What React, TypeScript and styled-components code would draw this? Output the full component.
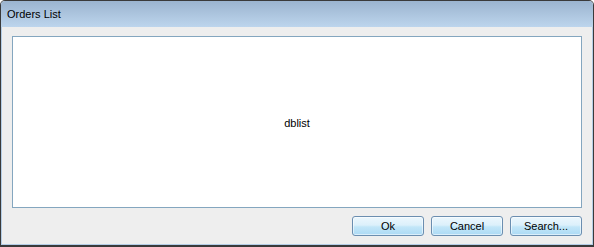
import React from "react";
import styled, { createGlobalStyle } from "styled-components";

const Global = createGlobalStyle`
  html, body { margin: 0; padding: 0; background: #ffffff; }
  * { box-sizing: border-box; }
`;

const Window = styled.div`
  width: 594px;
  height: 247px;
  display: flex;
  flex-direction: column;
  border: 1px solid #3a3a3a;
  border-bottom-width: 2px;
  border-radius: 5px 5px 0 0;
  overflow: hidden;
  font-family: Tahoma, "DejaVu Sans", "Liberation Sans", sans-serif;
  font-size: 11px;
  color: #000;
`;

const TitleBar = styled.div`
  height: 26px;
  flex: none;
  display: flex;
  align-items: center;
  padding-left: 6px;
  background: linear-gradient(#9bb4cf, #bdd5ed);
  font-family: "Liberation Sans", sans-serif;
  font-size: 11px;
`;

const Body = styled.div`
  flex: 1;
  display: flex;
  flex-direction: column;
  gap: 8px;
  padding: 9px 10px 8px;
  background: #eeeeee;
  border: 1px solid #b4cde6;
  border-top: none;
`;

const ListBox = styled.div`
  height: 172px;
  flex: none;
  display: flex;
  align-items: center;
  justify-content: center;
  background: #ffffff;
  border: 1px solid #84a6bf;
  font-family: "Liberation Sans", sans-serif;
  font-size: 11px;
  padding-top: 1px;
`;

const ButtonRow = styled.div`
  display: flex;
  justify-content: flex-end;
  gap: 7px;
`;

const Button = styled.button`
  width: 72px;
  height: 20px;
  padding: 0;
  border: 1px solid #6b8eb0;
  border-radius: 3px;
  background: linear-gradient(#ecf7fd 0%, #dcf0fb 45%, #c2e6f8 55%, #acdaf5 100%);
  font-family: "Liberation Sans", sans-serif;
  font-size: 11px;
  color: #000;
  box-shadow: inset 0 0 0 1px rgba(255, 255, 255, 0.55);
`;

export default function App() {
  return (
    <>
      <Global />
      <Window>
        <TitleBar>Orders List</TitleBar>
        <Body>
          <ListBox>dblist</ListBox>
          <ButtonRow>
            <Button>Ok</Button>
            <Button>Cancel</Button>
            <Button>Search...</Button>
          </ButtonRow>
        </Body>
      </Window>
    </>
  );
}
